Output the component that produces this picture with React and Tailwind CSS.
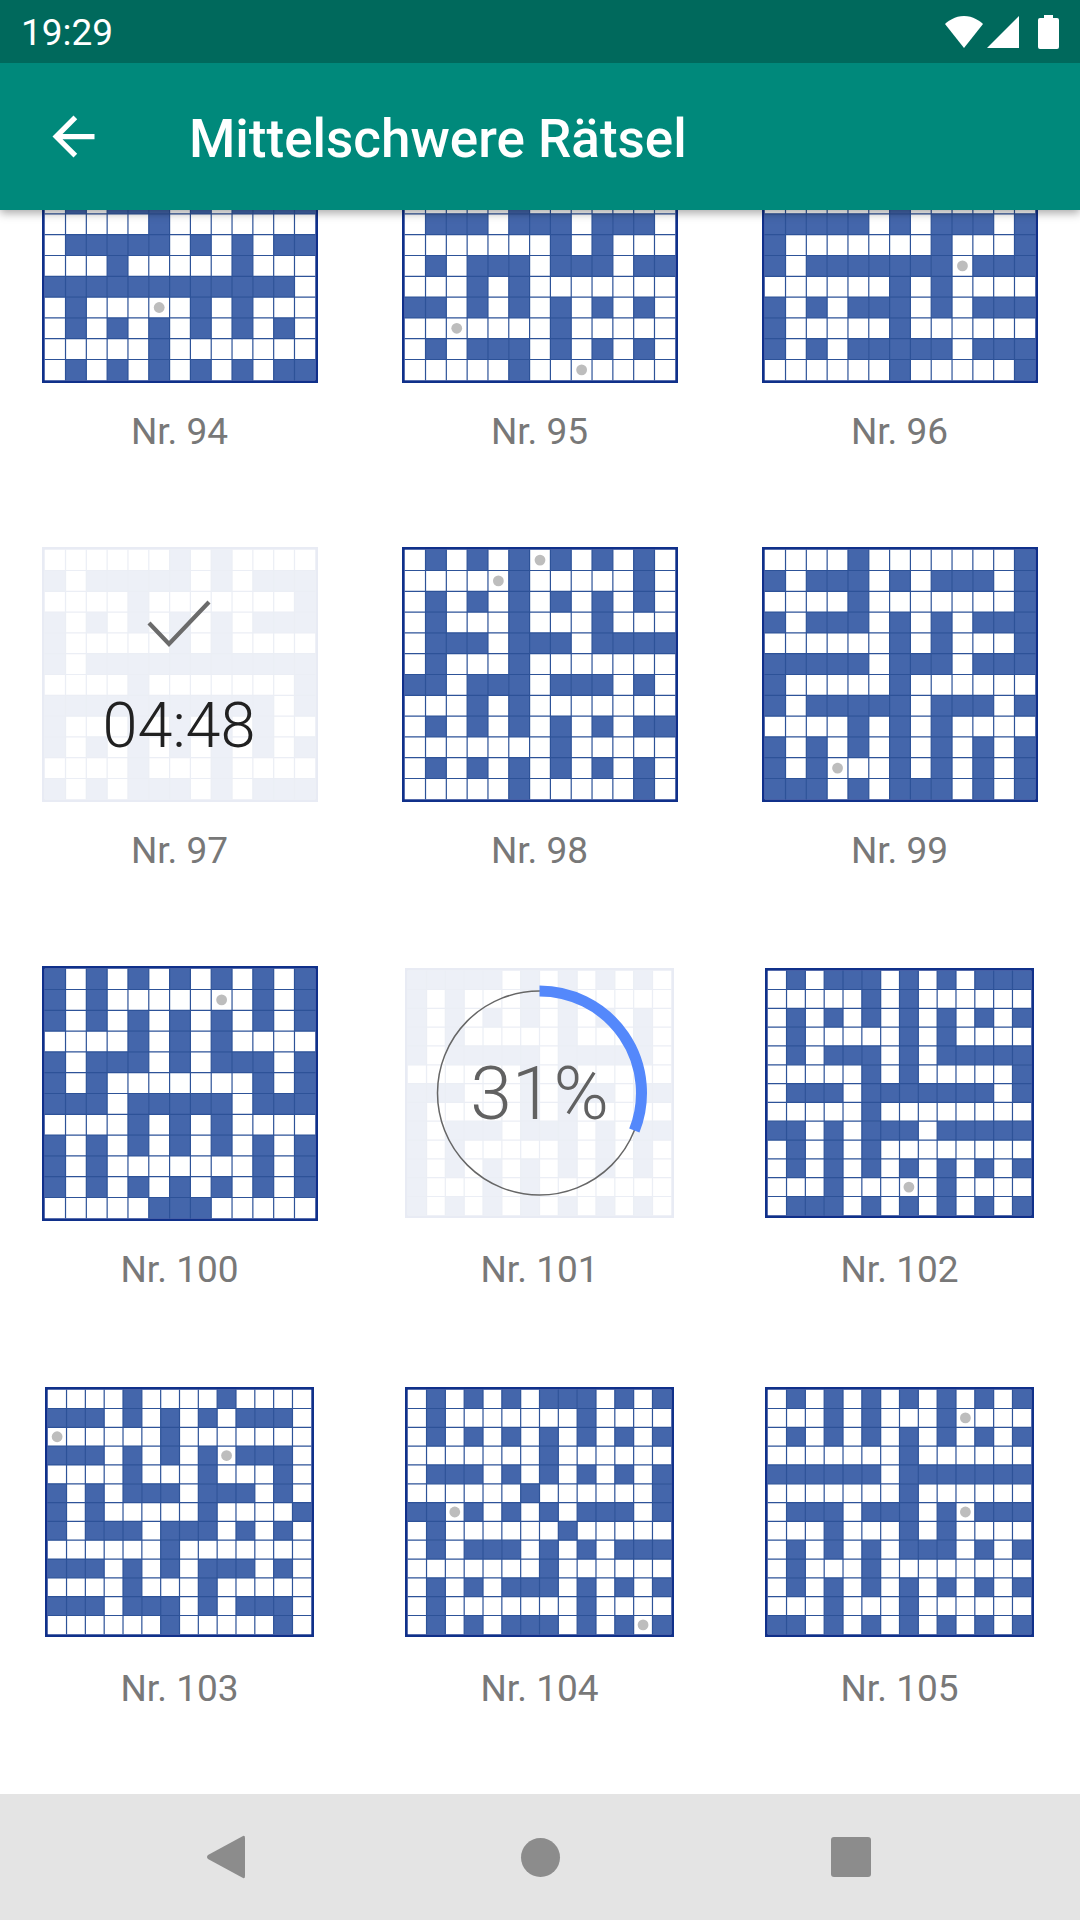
import React from "react";

const BLUE = "#4466ab";
const LINE = "#2d5298";
const EDGE = "#10308a";

const puzzles = [
  { n: 94, rows: [".............", ".............", ".............", ".#.###.#.####", ".....#.......", ".#####.#.#.##", "...#.....#...", "############.", ".#...o.#.#...", ".#.#.#.#.#.#.", ".....#.......", ".#.#.#.#.#.##"] },
  { n: 95, rows: [".............", ".............", ".............", ".....#.......", ".###.###.###.", ".......#.#...", ".#.###.###.##", "...#.#.......", "##.#.#.#.#.#.", "..o....#.....", ".#.###.#.#.#.", ".....#..o...."] },
  { n: 96, rows: [".............", ".............", ".............", "......#......", "#####.#.###.#", "#.......#...#", "#.#######o###", "......#.#....", "#.#.###.#.###", "#.....#......", "#.#.#####.###", "......#.....#"] },
  { n: 97, pale: true, rows: ["......#.#....", "#.#####.#.###", "....#.......#", "#.#.#.#.#.###", "#.....#.#....", "#.###########", "....#.......#", "###########.#", "#...#.#.#.#..", "#.#.#.#.#.#.#", "....#...#....", "#.#.###.#.###"] },
  { n: 98, rows: [".#.#.#o#.#.#.", "....o#.....#.", ".#.#.#.#.#.#.", ".#...#...#...", ".###.###.####", ".#...#.......", "##.###.###.#.", "...#.#.......", ".#.#.#.#.#.##", ".......#.....", ".#.#.#.#.#.#.", ".....#.....#."] },
  { n: 99, rows: ["....#.......#", "#.###.#.###.#", "....#.......#", "#.###.#.#.###", "......#.#...#", "#####.###.###", "#.....#......", "#.#####.###.#", "....#.#.#....", "#.#.#.#.#.#.#", "#.#o..#.#.#.#", "###.#.###.#.#"] },
  { n: 100, rows: ["#.#.#.#.#.#.#", "#.#.....o.#.#", "#.#.#.#.#.#.#", "....#.#.#....", "#.###.#.###.#", "#.#.......#.#", "###.#####.###", "....#.#.#....", "#.#.#.#.#.#.#", "#.#.......#.#", "#.#.#.#.#.#.#", ".....###....."] },
  { n: 101, pale: true, rows: ["#####.#.#.#.#.", "#.#...#.#.....", "#.#.#.#.#.#.#.", "#.#.....#...#.", "#.#####.#####.", "......#.#.....", "###...#.###.##", "#.....#.#.....", "#.###.###.#.##", "#.#.....#.#.#.", "#.#.#.#.#.#.#.", "#...#.#.......", "#.#.#.#.#.#.#."] },
  { n: 102, rows: [".#.###.#.#.###", ".....#.#......", ".#.#.#.#.#.#.#", ".#.....#.#....", ".#.###.#.#####", ".....#.#.....#", ".###.#######.#", ".....#........", "##.#.###.#####", ".#.#.#........", ".#.#.#.#.#.#.#", "...#...o.#....", ".###.#.#.#.#.#"] },
  { n: 103, rows: ["....#....#....", "###.#.#.#.###.", "o.....#.......", "###.#.#.#o###.", "....#...#...#.", "#.#.###.###.#.", "#.#.....#....#", "#.###.###.#.#.", "......#.......", "###.#.#.###.#.", "....#...#.....", "###.###.#.###.", "......#.....#."] },
  { n: 104, rows: [".#.#.#.###.#.#", ".#.......#....", ".#.#.#.#.#.#.#", ".......#......", ".###.#.#.#.#.#", "......#......#", "##o#.#.#.###.#", ".#......#.....", ".#.###.#.#.###", ".......#......", ".#.#.###.#.#.#", ".#.......#....", ".#.#.###.#.#o#"] },
  { n: 105, rows: [".#.#.#.#.#.#.#", "...#.#...#o...", ".#.#.#.#.#.#.#", ".......#......", "######.#######", ".......#......", ".###.###.#o###", "...#...#.#....", ".#.#.#.###.#.#", ".#...#........", ".#.#.#.#.#.#.#", "...#...#......", "##.#.#.#.#.#.#"] },
];

function Crossword({ rows, pale }) {
  const nr = rows.length;
  const nc = rows[0].length;
  const W = nc === 13 ? 276 : 269;
  const H = nc === 13 ? 255 : 250;
  const b = 2.7;
  const cw = (W - 2 * b) / nc;
  const ch = (H - 2 * b) / nr;
  const cells = [];
  const dots = [];
  rows.forEach((r, y) => {
    [...r].forEach((c, x) => {
      if (c === "#") cells.push(<rect key={`${x}-${y}`} x={b + x * cw} y={b + y * ch} width={cw} height={ch} fill={BLUE} />);
      if (c === "o") dots.push(<circle key={`${x}-${y}`} cx={b + (x + 0.5) * cw} cy={b + (y + 0.5) * ch} r={5.4} fill="#bdbdbd" />);
    });
  });
  const lines = [];
  for (let i = 1; i < nc; i++) lines.push(<line key={`v${i}`} x1={b + i * cw} x2={b + i * cw} y1={b} y2={H - b} stroke={LINE} strokeWidth={1.2} />);
  for (let i = 1; i < nr; i++) lines.push(<line key={`h${i}`} y1={b + i * ch} y2={b + i * ch} x1={b} x2={W - b} stroke={LINE} strokeWidth={1.2} />);
  return (
    <svg width={W} height={H} viewBox={`0 0 ${W} ${H}`} className={pale ? "block opacity-[0.09]" : "block"}>
      <rect x="0" y="0" width={W} height={H} fill="#ffffff" />
      {cells}
      {lines}
      {dots}
      <rect x={b / 2} y={b / 2} width={W - b} height={H - b} fill="none" stroke={EDGE} strokeWidth={b} />
    </svg>
  );
}

function Finished() {
  return (
    <div className="absolute inset-0 flex flex-col items-center">
      <svg width="276" height="110" viewBox="0 0 276 110" className="block">
        <path d="M107 76 L127 97 L167 55" fill="none" stroke="#6b6b6b" strokeWidth="4.2" />
      </svg>
      <div className="text-[63px] leading-[74px] mt-[32px] mr-[2px] font-light text-[#212121]">04:48</div>
    </div>
  );
}

function Progress() {
  const r = 102;
  const cx = 134.5;
  const cy = 125;
  const a = 0.31 * 2 * Math.PI;
  const ex = cx + r * Math.sin(a);
  const ey = cy - r * Math.cos(a);
  return (
    <div className="absolute inset-0 flex items-center justify-center">
      <svg width="269" height="250" viewBox="0 0 269 250" className="absolute inset-0">
        <circle cx={cx} cy={cy} r={r} fill="none" stroke="#666666" strokeWidth="1.5" />
        <path d={`M${cx} ${cy - r} A${r} ${r} 0 0 1 ${ex} ${ey}`} fill="none" stroke="#5488fb" strokeWidth="11" />
      </svg>
      <div className="relative text-[75px] leading-[90px] font-light text-[#616161]">31%</div>
    </div>
  );
}

function Tile({ p }) {
  const narrow = p.rows[0].length === 14;
  return (
    <div className="flex flex-col items-center h-[419px]">
      <div className="h-[255px] flex items-center justify-center">
        <div className={narrow ? "relative mr-[1px] mb-[1px]" : "relative"}>
          <Crossword rows={p.rows} pale={p.pale} />
          {p.n === 97 && <Finished />}
          {p.n === 101 && <Progress />}
        </div>
      </div>
      <div className="mt-[27px] mr-[1px] h-[43px] leading-[43px] text-[37px] text-[#787878]">Nr. {p.n}</div>
    </div>
  );
}

export default function App() {
  return (
    <div className="w-[1080px] h-[1920px] flex flex-col overflow-hidden bg-white font-['Roboto',sans-serif]">
      <div className="relative z-10 shadow-[0_3px_9px_rgba(0,0,0,0.35)]">
        <div className="h-[63px] bg-[#00695c] flex items-center justify-between pl-[21px] pr-[21px]">
          <div className="text-[37px] leading-[63px] mt-[2px] text-white">19:29</div>
          <div className="flex items-center">
            <svg width="38" height="32" viewBox="0 0 38 32" className="block">
              <path d="M19 32 L0 8 C3 5 10 0 19 0 S35 5 38 8 Z" fill="#ffffff" />
            </svg>
            <svg width="32" height="32" viewBox="0 0 32 32" className="block ml-[4px]">
              <path d="M32 0 V32 H0 Z" fill="#ffffff" />
            </svg>
            <svg width="21" height="34" viewBox="0 0 21 34" className="block ml-[19px]">
              <path d="M6 0 H15 V3 H19 Q21 3 21 5 V32 Q21 34 19 34 H2 Q0 34 0 32 V5 Q0 3 2 3 H6 Z" fill="#ffffff" />
            </svg>
          </div>
        </div>
        <div className="h-[147px] bg-[#00897b] flex items-center">
          <svg width="63" height="63" viewBox="0 0 24 24" className="block ml-[42px]">
            <path d="M20 11H7.83l5.59-5.59L12 4l-8 8 8 8 1.41-1.41L7.83 13H20v-2z" fill="#ffffff" />
          </svg>
          <div className="ml-[84px] mt-[5px] text-[53px] leading-[63px] font-medium text-white">Mittelschwere Rätsel</div>
        </div>
      </div>
      <div className="flex-1 overflow-hidden">
        <div className="grid grid-cols-3 mt-[-82px]">
          {puzzles.map((p) => (
            <Tile key={p.n} p={p} />
          ))}
        </div>
      </div>
      <div className="h-[126px] bg-[#e4e4e4] flex items-center">
        <svg width="39" height="44" viewBox="0 0 39 44" className="block ml-[206px]">
          <path d="M37 1 Q39 0 39 3 V41 Q39 44 37 43 L2 24 Q0 22 2 20 Z" fill="#8c8c8c" />
        </svg>
        <div className="ml-[276px] w-[39px] h-[39px] rounded-full bg-[#8c8c8c]" />
        <div className="ml-[271px] w-[40px] h-[40px] rounded-[3px] bg-[#8c8c8c]" />
      </div>
    </div>
  );
}
